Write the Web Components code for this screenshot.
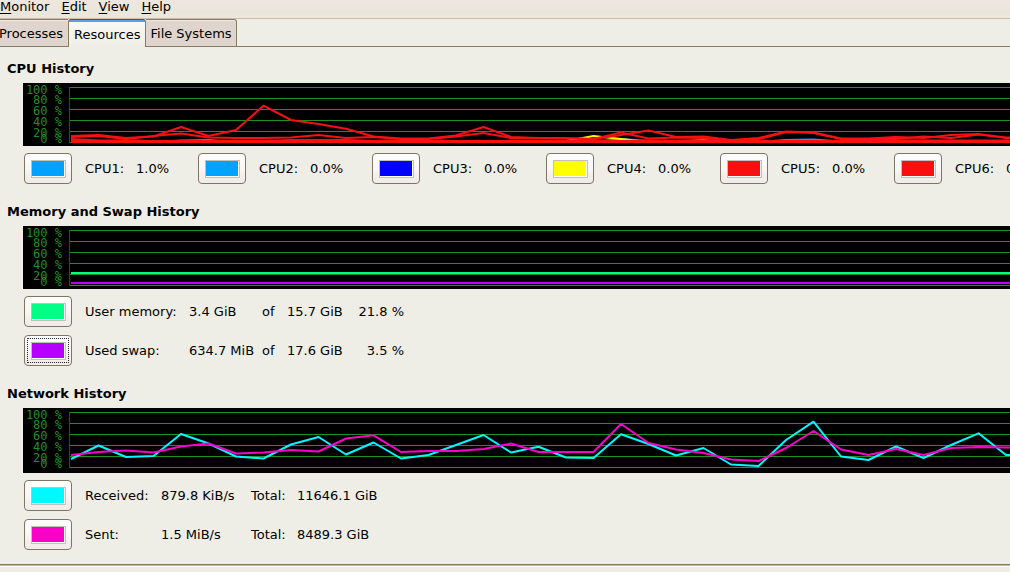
<!DOCTYPE html>
<html lang="en">
<head>
<meta charset="utf-8">
<title>System Monitor</title>
<style>
html, body { margin: 0; min-height: 100%; background: #efeee6; overflow-x: hidden; }
body { font: 13px/16px "DejaVu Sans", sans-serif; color: #000; }
</style>
</head>
<body>
<system-monitor></system-monitor>
<script>
class MenuBar extends HTMLElement {
  constructor() {
    super();
    this.attachShadow({ mode: 'open' }).innerHTML = `
      <style>
        :host { display: block; height: 18px; border-bottom: 1px solid #c9bfa9; background: linear-gradient(#f0e6df, #e8e7dc 70%, #efe5dd); }
        nav { display: flex; gap: 12px; }
        button { font: inherit; color: inherit; background: none; border: 0; padding: 0; margin: 0; line-height: 14px; }
        u { text-underline-offset: 2px; text-decoration-thickness: 1px; }
      </style>
      <nav>${['Monitor', 'Edit', 'View', 'Help'].map(t => `<button type="button"><u>${t[0]}</u>${t.slice(1)}</button>`).join('')}</nav>`;
  }
}
customElements.define('menu-bar', MenuBar);

class TabStrip extends HTMLElement {
  constructor() {
    super();
    this.attachShadow({ mode: 'open' }).innerHTML = `
      <style>
        :host { display: block; }
        div { display: flex; align-items: flex-end; height: 28px; box-shadow: inset 0 -1px #857c62; }
        button { font: inherit; color: inherit; margin: 0; box-sizing: border-box; height: 28px; padding: 2px 4px 0;
          border: 1px solid #857c62; border-left: 0; border-radius: 0 3px 0 0; background: #dfd5ce; box-shadow: inset 0 1px #eee7e2; }
        button:first-child { padding-left: 0; margin-left: -1px; border-radius: 0; border-right: 0; padding-right: 5px; }
        button[aria-selected=true] { padding: 2px 5px 0; border: 1px solid #857c62; border-top: 1px solid #33608f; border-bottom: 0; border-radius: 3px 3px 0 0;
          background: linear-gradient(#5a9fe0 2px, #f9f8f4 2px, #efeee6); box-shadow: none; }
      </style>
      <div role="tablist">
        <button type="button" role="tab" aria-selected="false">Processes</button>
        <button type="button" role="tab" aria-selected="true">Resources</button>
        <button type="button" role="tab" aria-selected="false">File Systems</button>
      </div>`;
  }
}
customElements.define('tab-strip', TabStrip);

const STEP = 27.5;
const SERIES = {
  cpu: [
    ['#1e9bff', [59,59,59,59,57.5,57,59,59,59,59,59,59,59,59,59,58,58,59,59,59,56,58,58,57,59,59,57,56.5,58.5,59,59,59,59,59,59]],
    ['#ffff00', [59,59,59,59,59,59,59,59,59,59,59,59,59,59,59,59,59,59,58,53,56,59,59,59,59,59,59,59,59,59,59,59,59,59,59]],
    ['#f81010', [53,52,55,53.5,44,53,47,22.7,37,41,45.7,53.5,55.5,55.5,52.5,44,54,55,55,56,52,47.5,54,53.5,57,55,48.5,49.5,55.5,55.5,54,55,52,51,55]],
    ['#f81010', [54,53,56,53,50.5,54.5,55,55,54.5,52,55,54,56,56,53.5,50,55,55,55.5,56,49.5,55.5,54.5,55,57.5,56,49,50,56,56,56,53.5,55,51.5,54.5]],
    ['#f81010', [56,57.5,57.5,58,58,58,58,58,57,57,57,58,57.5,58,58,58,58,58,58,57.5,58,57.5,58,58,58,58,58,58,58,57.5,57.5,57.5,57.5,57.5,57.5]],
    ['#f81010', Array(35).fill(58)],
    ['#f81010', Array(35).fill(59)]
  ],
  memory: [
    ['#00ff85', Array(35).fill(47)],
    ['#b500ff', Array(35).fill(57)]
  ],
  network: [
    ['#00f8ff', [51,37.5,49,48,26,35.5,48.5,50.5,36.5,29,46.5,34.5,50.5,47,37,27,44.5,38.7,49.5,50,26.3,36,47.5,40,56.5,58,32,13.7,48.5,52,38.5,50,37,25.3,47]],
    ['#fa00c8', [47,44,42.5,44.5,38.5,35.5,45.5,44.5,42,43.5,30.5,27.3,44,43,43,41,35.5,44,44,44,16,35,41.5,45,51.5,53,40,23,41.5,47,41,47,40,39,39.5]]
  ]
};

class HistoryChart extends HTMLElement {
  connectedCallback() {
    const kind = this.getAttribute('kind');
    const h = kind === 'network' ? 65 : 63;
    const grid = [0, 1, 2, 3, 4, 5].map(i => `<rect x="46" y="${4 + i * 11}" width="100%" height="1" fill="#1f8f26"/>`).join('');
    const labels = [['100 %', 11], ['80 %', 21], ['60 %', 32], ['40 %', 43], ['20 %', 54], ['0 %', 60]]
      .map(([t, y]) => `<text x="39" y="${y}">${t}</text>`).join('');
    const lines = SERIES[kind].map(([c, ys]) =>
      `<polyline stroke="${c}" points="${[...ys, ys[34]].map((y, i) => `${i * STEP},${y}`).join(' ')}"/>`).join('');
    this.attachShadow({ mode: 'open' }).innerHTML = `
      <style>
        :host { display: grid; grid-template-columns: 47px minmax(0, 1fr); background: #000; }
        svg { display: block; width: 100%; height: ${h}px; grid-row: 1; }
        .scale { grid-column: 1 / 3; }
        .plot { grid-column: 2; overflow: hidden; }
        text { font: 12px "DejaVu Sans Mono", monospace; fill: #1f8f26; text-anchor: end; }
        polyline { fill: none; stroke-width: 2px; vector-effect: non-scaling-stroke; stroke-linejoin: round; }
      </style>
      <svg class="scale">${grid}<rect x="46" y="4" width="1" height="56" fill="#14601a"/>${labels}</svg>
      <svg class="plot" viewBox="-1 0 940 ${h}" preserveAspectRatio="none" aria-hidden="true">${lines}</svg>`;
  }
}
customElements.define('history-chart', HistoryChart);

class LegendRow extends HTMLElement {
  connectedCallback() {
    const cells = this.getAttribute('cells').split('|');
    const focus = this.hasAttribute('focused') ? 'focused' : '';
    this.attachShadow({ mode: 'open' }).innerHTML = `
      <style>
        :host { display: grid; grid-template-columns: 49px var(--columns); column-gap: 12px; align-items: center; white-space: nowrap; }
        button { box-sizing: border-box; width: 48px; height: 31px; padding: 0 0 0 6px; margin: 0; border: 1px solid #7d7566; border-radius: 4px;
          background: linear-gradient(#fff, #faf7f5 50%, #f4eeea 75%, #f2ece8); display: flex; align-items: center; }
        i { display: block; width: 32px; height: 15px; border: 1px solid #c2c0bc; padding: 0 1px 1px 0; background: content-box ${this.getAttribute('color')}; box-shadow: inset -1px -1px #fff; }
        .focused { outline: 1px dotted #222; outline-offset: -4px; }
        .pct { text-align: right; }
      </style>
      <button id="swatch" type="button" class="${focus}"><i></i></button>
      <label for="swatch">${cells[0]}</label>
      ${cells.slice(1).map((c, i) => `<span class="${i === 3 ? 'pct' : ''}">${c}</span>`).join('')}`;
  }
}
customElements.define('legend-row', LegendRow);

class HistorySection extends HTMLElement {
  connectedCallback() {
    this.attachShadow({ mode: 'open' }).innerHTML = `
      <style>
        :host { display: block; }
        h2 { font: bold 13px/16px "DejaVu Sans", sans-serif; margin: 0 0 6px 7px; }
        history-chart { margin-left: 23px; }
        .legend { display: flex; flex-direction: column; gap: 8px; padding: 7px 0 0 24px; overflow: hidden; }
        :host([kind=cpu]) .legend { flex-direction: row; gap: 12px; }
      </style>
      <h2>${this.getAttribute('heading')}</h2>
      <history-chart kind="${this.getAttribute('kind')}"></history-chart>
      <div class="legend"><slot></slot></div>`;
  }
}
customElements.define('history-section', HistorySection);

class SystemMonitor extends HTMLElement {
  constructor() {
    super();
    const cpus = ['#00a2ff', '#00a2ff', '#0000ff', '#ffff00', '#f81010', '#f81010']
      .map((c, i) => `<legend-row color="${c}" cells="CPU${i + 1}:|${i ? '0.0%' : '1.0%'}"></legend-row>`).join('');
    this.attachShadow({ mode: 'open' }).innerHTML = `
      <style>
        :host { display: block; overflow-x: hidden; }
        main { display: flex; flex-direction: column; gap: 20px; padding: 14px 0; border-bottom: 1px solid #857c62; box-shadow: 0 1px #c4baa8, 0 2px #fff; margin-bottom: 2px; }
        [kind=cpu] { --columns: 39px 50px; }
        [kind=cpu] legend-row { flex: none; }
        [kind=memory] { --columns: 92px 61px 13px 53px 52px; }
        [kind=network] { --columns: 64px 78px 34px 90px; }
      </style>
      <menu-bar></menu-bar>
      <tab-strip></tab-strip>
      <main>
        <history-section kind="cpu" heading="CPU History">${cpus}</history-section>
        <history-section kind="memory" heading="Memory and Swap History">
          <legend-row color="#00ff85" cells="User memory:|3.4 GiB|of|15.7 GiB|21.8 %"></legend-row>
          <legend-row color="#b500ff" focused cells="Used swap:|634.7 MiB|of|17.6 GiB|3.5 %"></legend-row>
        </history-section>
        <history-section kind="network" heading="Network History">
          <legend-row color="#00f8ff" cells="Received:|879.8 KiB/s|Total:|11646.1 GiB"></legend-row>
          <legend-row color="#fa00c8" cells="Sent:|1.5 MiB/s|Total:|8489.3 GiB"></legend-row>
        </history-section>
      </main>`;
  }
}
customElements.define('system-monitor', SystemMonitor);
</script>
</body>
</html>
